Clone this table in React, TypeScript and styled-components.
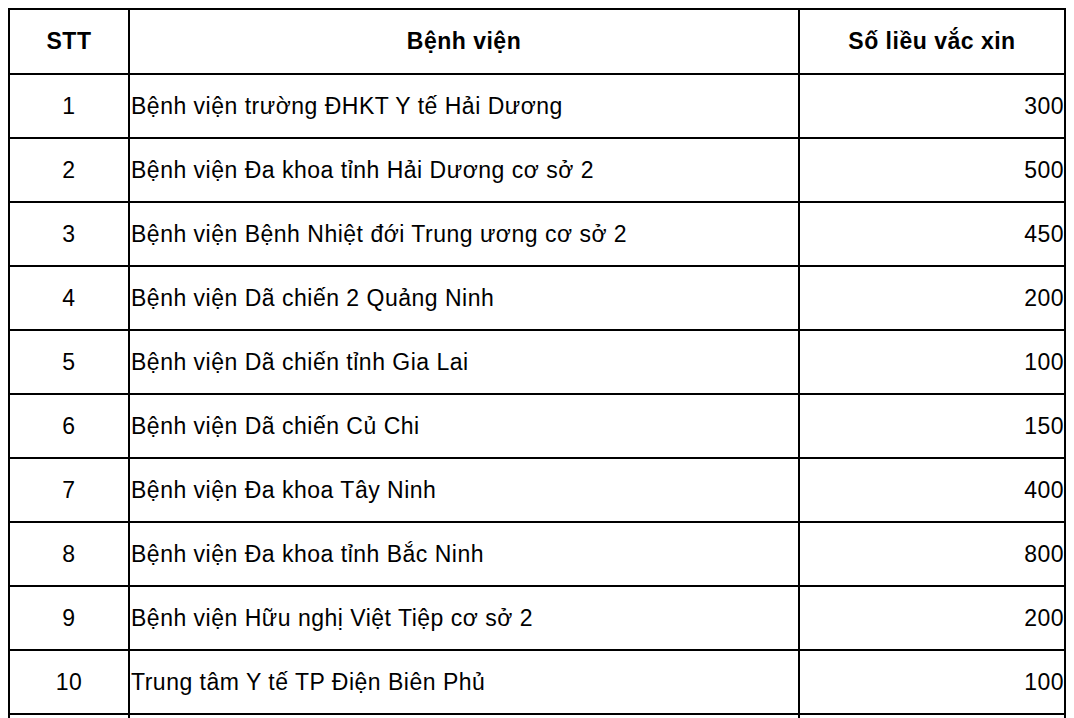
import React from "react";
import styled, { createGlobalStyle } from "styled-components";

const rows: [number, string, number][] = [
  [1, "Bệnh viện trường ĐHKT Y tế Hải Dương", 300],
  [2, "Bệnh viện Đa khoa tỉnh Hải Dương cơ sở 2", 500],
  [3, "Bệnh viện Bệnh Nhiệt đới Trung ương cơ sở 2", 450],
  [4, "Bệnh viện Dã chiến 2 Quảng Ninh", 200],
  [5, "Bệnh viện Dã chiến tỉnh Gia Lai", 100],
  [6, "Bệnh viện Dã chiến Củ Chi", 150],
  [7, "Bệnh viện Đa khoa Tây Ninh", 400],
  [8, "Bệnh viện Đa khoa tỉnh Bắc Ninh", 800],
  [9, "Bệnh viện Hữu nghị Việt Tiệp cơ sở 2", 200],
  [10, "Trung tâm Y tế TP Điện Biên Phủ", 100],
];

const GlobalStyle = createGlobalStyle`
  body {
    margin: 8px;
    background: #fff;
    font-family: "Liberation Sans", Arial, sans-serif;
    color: #000;
  }
`;

const App = () => {
  return (
    <>
      <GlobalStyle />
      <Table>
        <colgroup>
          <col style={{ width: 120 }} />
          <col style={{ width: 670 }} />
          <col style={{ width: 266 }} />
        </colgroup>
        <thead>
          <tr>
            <Head>STT</Head>
            <Head>Bệnh viện</Head>
            <Head>Số liều vắc xin</Head>
          </tr>
        </thead>
        <tbody>
          {rows.map(([stt, name, dose]) => (
            <tr key={stt}>
              <Cell $align="center">{stt}</Cell>
              <Cell $align="left">{name}</Cell>
              <Cell $align="right">{dose}</Cell>
            </tr>
          ))}
          <tr>
            <Cell $align="center"></Cell>
            <Cell $align="left"></Cell>
            <Cell $align="right"></Cell>
          </tr>
        </tbody>
      </Table>
    </>
  );
};

const Table = styled.table`
  width: 1058px;
  table-layout: fixed;
  border-collapse: separate;
  border-spacing: 0;
  border-top: 2px solid #000;
  border-left: 2px solid #000;
  font-size: 23px;
  letter-spacing: 0.5px;
`;

const Head = styled.th`
  height: 63px;
  padding: 0;
  border-right: 2px solid #000;
  border-bottom: 2px solid #000;
  font-weight: bold;
  text-align: center;
  vertical-align: middle;
`;

const Cell = styled.td<{ $align: "left" | "center" | "right" }>`
  height: 62px;
  padding: 0 0 0 ${(p) => (p.$align === "left" ? "1px" : "0")};
  border-right: 2px solid #000;
  border-bottom: 2px solid #000;
  text-align: ${(p) => p.$align};
  vertical-align: middle;
  white-space: nowrap;
`;

export default App;
